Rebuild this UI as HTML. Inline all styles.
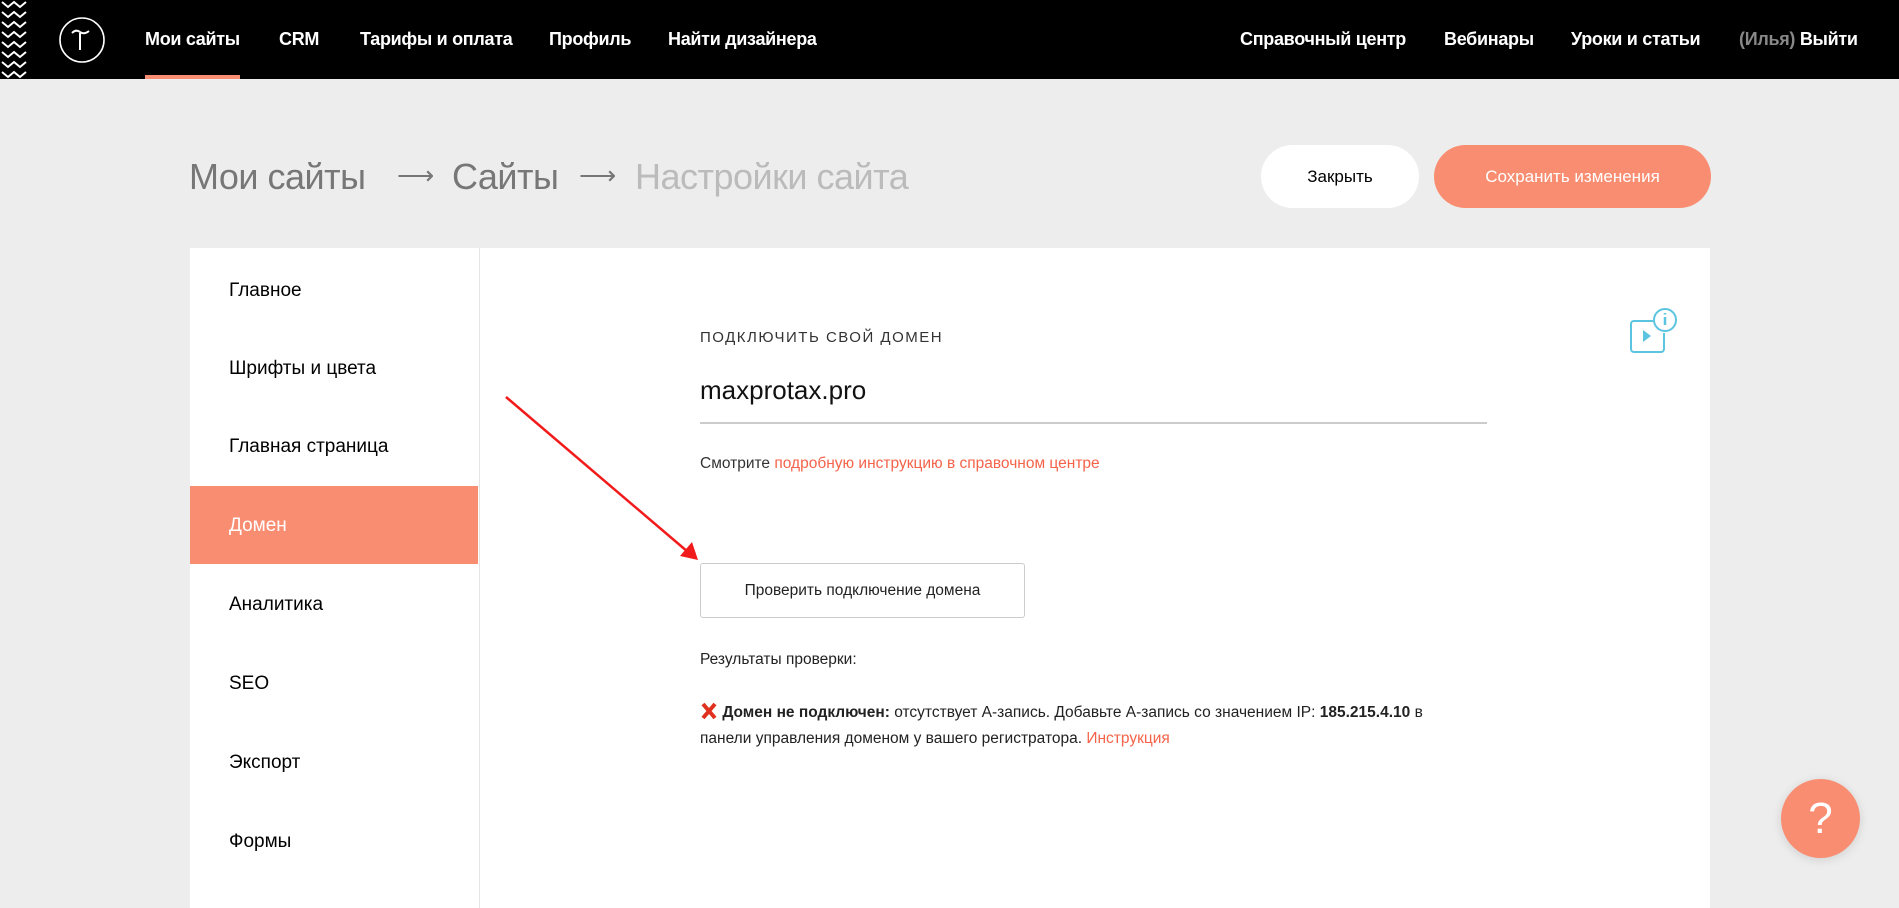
<!DOCTYPE html>
<html><head><meta charset="utf-8">
<style>
*{margin:0;padding:0;box-sizing:border-box}
body{width:1899px;height:896px;overflow:hidden;background:#ededed;font-family:"Liberation Sans","Noto Sans CJK SC",sans-serif;position:relative;color:#000}
.hdr{position:absolute;left:0;top:0;width:1899px;height:79px;background:#000}
.nav{position:absolute;top:29px;color:#fff;font-size:18px;font-weight:bold;letter-spacing:-0.3px;white-space:nowrap}
.abs{position:absolute;white-space:nowrap}
.bc{position:absolute;top:156px;font-size:36px;color:#777;letter-spacing:-0.5px}
.btn{position:absolute;top:145px;height:63px;border-radius:32px;font-size:17px;display:flex;align-items:center;justify-content:center}
.side{position:absolute;left:229px;font-size:19px;color:#000}
</style></head><body>
<div class="hdr"></div>
<svg class="abs" style="left:0;top:0" width="32" height="79">
<g fill="none" stroke="#fff" stroke-width="2">
<path d="M2 2 l6 5 l6 -5 l6 5 l6 -5 M2 12 l6 5 l6 -5 l6 5 l6 -5 M2 22 l6 5 l6 -5 l6 5 l6 -5 M2 32 l6 5 l6 -5 l6 5 l6 -5 M2 42 l6 5 l6 -5 l6 5 l6 -5 M2 52 l6 5 l6 -5 l6 5 l6 -5 M2 62 l6 5 l6 -5 l6 5 l6 -5 M2 72 l6 5 l6 -5 l6 5 l6 -5"/>
</g></svg>
<svg class="abs" style="left:58;top:16px;left:58px" width="48" height="48">
<circle cx="24" cy="24" r="22" fill="none" stroke="#fff" stroke-width="1.6"/>
<path d="M14 17 q4 -4 8 -1 q4 3 9 -1 M22 17 v17" fill="none" stroke="#fff" stroke-width="2"/>
</svg>
<div class="nav" style="left:145px">Мои сайты</div>
<div class="abs" style="left:145px;top:75px;width:95px;height:4px;background:#f98d71"></div>
<div class="nav" style="left:279px">CRM</div>
<div class="nav" style="left:360px">Тарифы и оплата</div>
<div class="nav" style="left:549px">Профиль</div>
<div class="nav" style="left:668px">Найти дизайнера</div>
<div class="nav" style="left:1240px">Справочный центр</div>
<div class="nav" style="left:1444px">Вебинары</div>
<div class="nav" style="left:1571px">Уроки и статьи</div>
<div class="nav" style="left:1739px"><span style="color:#888">(Илья)</span> Выйти</div>

<div class="bc" style="left:189px">Мои сайты</div>
<div class="bc" style="left:397px;font-size:26px;top:160px">⟶</div>
<div class="bc" style="left:452px">Сайты</div>
<div class="bc" style="left:579px;font-size:26px;top:160px">⟶</div>
<div class="bc" style="left:635px;color:#bbb">Настройки сайта</div>

<div class="btn" style="left:1261px;width:158px;background:#fff;color:#000">Закрыть</div>
<div class="btn" style="left:1434px;width:277px;background:#f98d71;color:#fff">Сохранить изменения</div>

<div class="abs" style="left:190px;top:248px;width:1520px;height:660px;background:#fff"></div>
<div class="abs" style="left:479px;top:248px;width:1px;height:660px;background:#e4e4e4"></div>
<div class="abs" style="left:190px;top:486px;width:288px;height:78px;background:#f98d71"></div>
<div class="side" style="top:280px">Главное</div>
<div class="side" style="top:358px">Шрифты и цвета</div>
<div class="side" style="top:436px">Главная страница</div>
<div class="side" style="top:515px;color:#fff">Домен</div>
<div class="side" style="top:594px">Аналитика</div>
<div class="side" style="top:673px">SEO</div>
<div class="side" style="top:752px">Экспорт</div>
<div class="side" style="top:831px">Формы</div>

<div class="abs" style="left:700px;top:329px;font-size:15px;letter-spacing:1.5px;color:#333">ПОДКЛЮЧИТЬ СВОЙ ДОМЕН</div>
<div class="abs" style="left:700px;top:375px;font-size:26px;color:#111">maxprotax.pro</div>
<div class="abs" style="left:700px;top:422px;width:787px;height:2px;background:#ccc"></div>
<div class="abs" style="left:700px;top:455px;font-size:15.5px;color:#333">Смотрите <span style="color:#f4634a">подробную инструкцию в справочном центре</span></div>
<div class="abs" style="left:700px;top:563px;width:325px;height:55px;border:1px solid #ccc;border-radius:3px;font-size:15.5px;color:#222;display:flex;align-items:center;justify-content:center">Проверить подключение домена</div>
<div class="abs" style="left:700px;top:651px;font-size:15.5px;color:#222">Результаты проверки:</div>
<div class="abs" style="left:700px;top:700px;font-size:15.5px;color:#222;line-height:26px">
<svg width="18" height="18" style="vertical-align:-3px"><path d="M3 2 L15 16 M15 2 L3 16" stroke="#e0301e" stroke-width="4"/></svg> <b>Домен не подключен:</b> отсутствует А-запись. Добавьте А-запись со значением IP: <b>185.215.4.10</b> в<br>панели управления доменом у вашего регистратора. <span style="color:#f4634a">Инструкция</span></div>

<svg class="abs" style="left:1626px;top:305px" width="56" height="50">
<g fill="none" stroke="#5bc4e0" stroke-width="2">
<path d="M27 16 H8 a3 3 0 0 0 -3 3 v25 a3 3 0 0 0 3 3 h27 a3 3 0 0 0 3 -3 v-16"/>
<circle cx="39" cy="15" r="11"/>
<path d="M39 12 v8 M39 8 v1.5" stroke-width="2.5"/>
</g>
<path d="M17 25 l8 6 l-8 6z" fill="#5bc4e0"/>
</svg>

<svg class="abs" style="left:500px;top:390px" width="210" height="180">
<path d="M6 7 L188 162" stroke="#f21b1b" stroke-width="2.5"/>
<path d="M198 170 L180 166 L192 152z" fill="#f21b1b"/>
</svg>

<div class="abs" style="left:1781px;top:779px;width:79px;height:79px;border-radius:50%;background:#f98d71;box-shadow:0 2px 10px rgba(0,0,0,.12);color:#fff;font-size:44px;font-weight:300;display:flex;align-items:center;justify-content:center">?</div>
</body></html>
